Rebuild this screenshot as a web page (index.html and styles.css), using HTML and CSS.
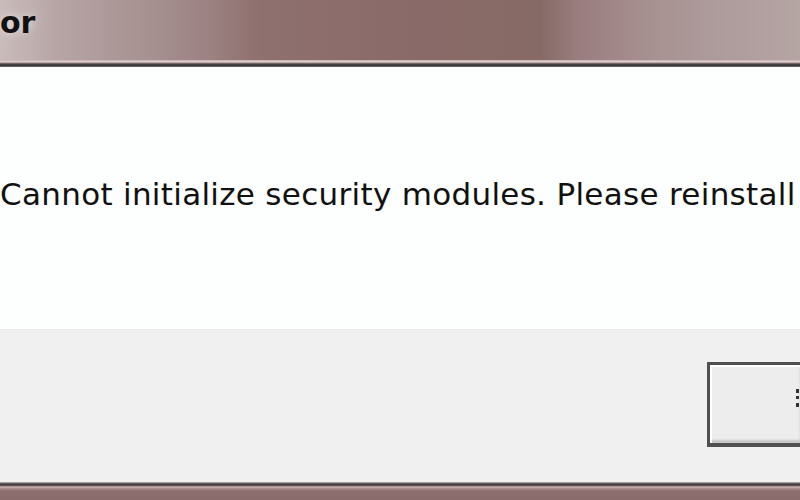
FILE: index.html
```html
<!DOCTYPE html>
<html>
<head>
<meta charset="utf-8">
<link rel="stylesheet" href="styles.css">
</head>
<body>
<div class="window">
  <div class="titlebar"><span class="title">or</span></div>
  <div class="frame-top"></div>
  <div class="content">
    <p class="message">Cannot initialize security modules. Please reinstall</p>
  </div>
  <div class="footer">
    <div class="button"><span class="focus"></span></div>
  </div>
  <div class="frame-bottom"></div>
</div>
</body>
</html>
```
FILE: styles.css
```css
html, body {
  margin: 0;
  padding: 0;
  width: 800px;
  height: 500px;
  overflow: hidden;
  background: #8c6c6a;
}
.window {
  display: flex;
  flex-direction: column;
  width: 800px;
  height: 500px;
}
.titlebar {
  height: 60px;
  flex: none;
  background: linear-gradient(90deg, #cabcbc 0px, #b6a4a4 60px, #a69090 150px, #9c8282 210px, #8e706e 260px, #8a6a68 420px, #866a66 540px, #987c7e 575px, #a68e8e 640px, #ae9c9c 720px, #b4a4a2 800px);
  display: flex;
  align-items: flex-start;
}
.title {
  font-family: "DejaVu Sans", sans-serif;
  font-weight: bold;
  font-size: 30px;
  line-height: 1;
  color: #111;
  margin-top: 8px;
  margin-left: 0;
  text-shadow: 0 0 10px rgba(255,255,255,0.6);
}
.frame-top {
  height: 7px;
  flex: none;
  background: linear-gradient(180deg, #b89ea0 0px, #e2d0d0 1px, #dccaca 2px, #9a8888 3px, #4a4242 4px, #3e3838 6px, #8a8686 7px);
}
.content {
  height: 262px;
  flex: none;
  background: #fdfefe;
  display: flex;
  align-items: flex-start;
}
.message {
  margin: 0;
  margin-top: 109px;
  margin-left: 0;
  white-space: nowrap;
  font-family: "DejaVu Sans", sans-serif;
  font-size: 31px;
  letter-spacing: 0.3px;
  line-height: 36px;
  color: #111;
}
.footer {
  flex: 1;
  background: #f0f0f0;
  border-top: 1px solid #eaeaea;
  display: flex;
  align-items: flex-start;
}
.button {
  margin-top: 32px;
  margin-left: 707px;
  width: 120px;
  height: 78px;
  border: 3px solid #505050;
  border-bottom-width: 4px;
  border-right: none;
  background: #ededed;
  box-shadow: inset 2px 2px 0 #ffffff, inset 0 -3px 2px #c8c8c8;
  position: relative;
}
.focus {
  position: absolute;
  left: 86px;
  top: 24px;
  width: 3px;
  height: 18px;
  border-left: 3px dotted #333;
}
.frame-bottom {
  height: 20px;
  flex: none;
  background: linear-gradient(180deg, #f6f6f6 0px, #e8e8e8 2px, #6a6262 3px, #3c3636 5px, #807070 6px, #cdb6b6 7px, #a08484 9px, #8e6e6e 11px, #8a6c6c 20px);
}
```
